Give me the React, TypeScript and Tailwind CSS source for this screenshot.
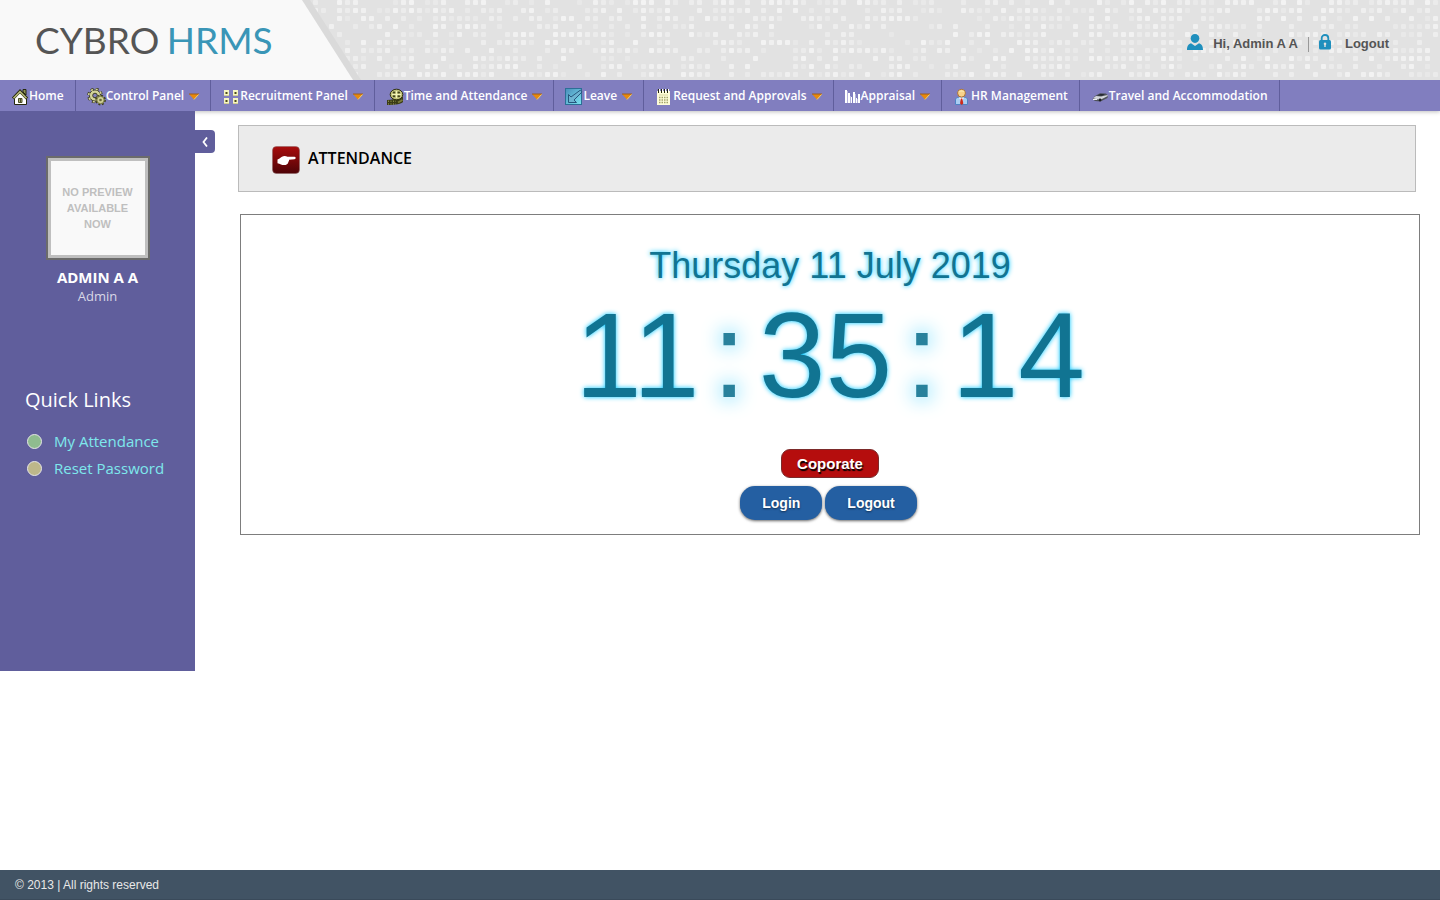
import React, { useMemo } from 'react';

type IconName =
  | 'home'
  | 'gears'
  | 'panel'
  | 'film'
  | 'leave'
  | 'note'
  | 'bars'
  | 'person'
  | 'car';

interface MenuItem {
  label: string;
  icon: IconName;
  hasMenu?: boolean;
}

const MENU: MenuItem[] = [
  { label: 'Home', icon: 'home' },
  { label: 'Control Panel', icon: 'gears', hasMenu: true },
  { label: 'Recruitment Panel', icon: 'panel', hasMenu: true },
  { label: 'Time and Attendance', icon: 'film', hasMenu: true },
  { label: 'Leave', icon: 'leave', hasMenu: true },
  { label: 'Request and Approvals', icon: 'note', hasMenu: true },
  { label: 'Appraisal', icon: 'bars', hasMenu: true },
  { label: 'HR Management', icon: 'person' },
  { label: 'Travel and Accommodation', icon: 'car' },
];

const QUICK_LINKS = [
  { label: 'My Attendance', dot: 'bg-[#8fbc8f]' },
  { label: 'Reset Password', dot: 'bg-[#bdb78a]' },
];

const MenuIcon = ({ name }: { name: IconName }) => {
  const common = { width: 18, height: 18, viewBox: '0 0 18 18', 'aria-hidden': true };

  switch (name) {
    case 'home':
      return (
        <svg {...common}>
          <path d="M12 1.5h3V7l-3-3z" fill="#8c8f52" stroke="#26280f" />
          <path d="M3.500 9.500 9 4l6.500 5.500v7h-12z" fill="#fff" stroke="#26280f" />
          <path d="M2 10.500 9 3.200l7 7.300" fill="none" stroke="#26280f" strokeWidth="3" />
          <path d="M2.500 10.300 9 3.700l6.500 6.600" fill="none" stroke="#b5b878" strokeWidth="1.600" />
          <path d="M7.500 10.500H11v4H7.500z" fill="#a9ac74" stroke="#4b4d27" />
          <path d="M9.500 11v3" stroke="#4b4d27" />
        </svg>
      );
    case 'gears':
      return (
        <svg {...common} width={19} viewBox="0 0 19 18">
          <circle cx="8" cy="7.500" r="6.300" fill="none" stroke="#3c3d20" strokeWidth="3" strokeDasharray="2.700 2.250" />
          <circle cx="8" cy="7.500" r="5.600" fill="#d3d39a" stroke="#3c3d20" />
          <circle cx="8" cy="7.500" r="6.300" fill="none" stroke="#d3d39a" strokeWidth="1.600" strokeDasharray="2 2.950" />
          <circle cx="8" cy="7.500" r="2.300" fill="#817ebf" stroke="#3c3d20" />
          <circle cx="13.500" cy="12" r="4.200" fill="none" stroke="#3c3d20" strokeWidth="2.400" strokeDasharray="1.800 1.500" />
          <circle cx="13.500" cy="12" r="3.700" fill="#cfcf95" stroke="#77783f" />
          <circle cx="13.500" cy="12" r="1.300" fill="#66673a" />
        </svg>
      );
    case 'panel':
      return (
        <svg {...common} shapeRendering="crispEdges">
          {[2, 11].map((x) =>
            [2, 10].map((y) => (
              <g key={`${x}-${y}`}>
                <rect x={x} y={y} width="5" height="6" fill="#f7f5c4" />
                <rect x={x} y={y + 5} width="5" height="1" fill="#d2cf92" />
                <rect x={x + 1} y={y + 2} width="3" height="2" fill="#a3a067" />
                <rect x={x + 2} y={y + 2} width="1" height="2" fill="#494a1f" />
              </g>
            ))
          )}
        </svg>
      );
    case 'film':
      return (
        <svg {...common}>
          <path d="M1 12c5 0 8-1 10-3h6v5c-2 2-6 3-16 3z" fill="#3a3b16" />
          <path d="M2 13.200h8M2 16h8" stroke="#a9aa60" strokeDasharray="1 1.500" />
          <path d="M12 14.500 16.500 12" stroke="#7b7c3b" strokeWidth="2" />
          <ellipse cx="10.500" cy="6.500" rx="6.300" ry="5.300" fill="#c3c47d" stroke="#2f300f" />
          <ellipse cx="8" cy="4.600" rx="1.300" ry="1" fill="#43441c" />
          <ellipse cx="12.800" cy="4.600" rx="1.300" ry="1" fill="#43441c" />
          <ellipse cx="8" cy="8.300" rx="1.300" ry="1" fill="#43441c" />
          <ellipse cx="12.800" cy="8.300" rx="1.300" ry="1" fill="#43441c" />
          <path d="M10.500 3v7M6 6.500h9" stroke="#f3f3b8" />
        </svg>
      );
    case 'leave':
      return (
        <svg {...common}>
          <defs>
            <linearGradient id="leave-fill" x1="0" y1="0" x2="1" y2="1">
              <stop offset="0" stopColor="#4a8dba" />
              <stop offset="1" stopColor="#7be4f0" />
            </linearGradient>
          </defs>
          <rect x="0.500" y="0.500" width="16" height="16" fill="url(#leave-fill)" stroke="#2c6f96" />
          <path d="M3.500 14.500v-8L6 9l9.500-7L17 4l-8 8 2.500 2.500z" fill="#6db4d2" stroke="#27567d" />
        </svg>
      );
    case 'note':
      return (
        <svg {...common}>
          <rect x="2" y="3" width="13" height="14" fill="#fdfbd8" />
          <path d="M3.500 1v4M6.500 1v4M9.500 1v4M12.500 1v4" stroke="#24240f" />
          <path d="M4.500 1v3M7.500 1v3M10.500 1v3M13.500 1v3" stroke="#fff" />
          <path d="M4 9.500h9M4 12h9M4 14.500h9" stroke="#a2a36a" strokeWidth="1.500" strokeDasharray="1.500 1" />
          <path d="M4 7h9" stroke="#d8d6a2" />
        </svg>
      );
    case 'bars':
      return (
        <svg {...common} width={16} viewBox="0 0 16 18" shapeRendering="crispEdges">
          <path d="M0 2h2v13H0zM3 5h2v10H3zM6 9h1v6H6zM8 4h2v11H8zM11 10h1v5h-1zM13 6h2v9h-2z" fill="#fff" />
          <path d="M2 3h1v12H2zM5 8h1v7H5zM10 6h1v9h-1zM12 11h1v4h-1z" fill="#b4b2dc" />
        </svg>
      );
    case 'person':
      return (
        <svg {...common}>
          <path d="M2.500 16.500V12C2.500 9.500 5 9 8.500 9s6 .5 6 3v4.500z" fill="#aacdf2" stroke="#4e82c4" />
          <path d="M6 9.500 8.500 14 11 9.500z" fill="#fff" />
          <path d="M7.800 10.500h1.500l1 5-1.500 1.500-1.800-1.500z" fill="#cf2a1c" />
          <circle cx="8.500" cy="5.200" r="3.900" fill="#f8d28b" stroke="#a96f31" />
          <path d="M5 4.500C6 1.500 11 1.500 12 4.500 10 3.500 7 3.700 5 4.500z" fill="#fae6a9" />
        </svg>
      );
    case 'car':
      return (
        <svg {...common}>
          <path d="M1.500 11 4 8 9 5.300l6 .2 2 2-.5 2.500-7 3.500L4 13z" fill="#50545c" />
          <path d="M2 10.300 5 8l5 .5L16.500 7l.3 1L9 12z" fill="#d3d6dc" />
          <path d="m6 7.500 3.500-1.600 4.500.1-3 1.700z" fill="#262a31" />
          <circle cx="9" cy="12" r="1.400" fill="#1c1e22" />
          <path d="M2 11.500h4" stroke="#eceef1" />
        </svg>
      );
  }
};

const Caret = () => (
  <svg width="10" height="7" viewBox="0 0 10 7" className="ml-[5px] mt-0.5" aria-hidden>
    <path d="M0 1h10L5 6.500z" fill="#e8890c" />
    <path d="M0 .5h10v1H0z" fill="#9c5a1a" />
    <path d="M9.500 1.500 5 6.500" stroke="#f6d36b" />
  </svg>
);

// Scattered light squares behind the header, seeded so they never jump around
const HeaderPattern = () => {
  const cells = useMemo(() => {
    const list: { x: number; y: number; o: number }[] = [];
    let seed = 48271;
    for (let row = 0; row < 10; row++) {
      for (let col = 0; col < 320; col++) {
        seed = (seed * 16807) % 2147483647;
        const r = seed / 2147483647;
        if (r < 0.6) list.push({ x: col * 8, y: row * 8, o: 0.3 + r });
      }
    }
    return list;
  }, []);

  return (
    <svg className="absolute inset-0 h-full w-full" aria-hidden>
      {cells.map((c) => (
        <rect key={`${c.x}-${c.y}`} x={c.x + 1} y={c.y} width="5" height="5" rx="1" fill="#f5f5f5" opacity={c.o} />
      ))}
      <path d="M0 0h310l51 80H0z" fill="#dadada" />
      <path d="M0 0h302l51 80H0z" fill="#f9f9f9" />
    </svg>
  );
};

const Header = () => (
  <header className="relative h-20 overflow-hidden bg-[#e2e2e2]">
    <HeaderPattern />
    <div className="relative flex h-full items-center justify-between pl-[35px] pr-[51px]">
      <h1 className="pb-0.5 font-['Lato',sans-serif] text-[37px] leading-none text-[#555]">
        CYBRO <span className="-ml-0.5 text-[#3a96b7]">HRMS</span>
      </h1>
      <div className="flex items-center pt-1 text-[13px] font-bold text-[#555]">
        <a href="#profile" className="flex items-center gap-2.5">
          <svg width="16" height="16" viewBox="0 0 16 16" fill="#1f8fbd" aria-hidden>
            <path d="M8 0c2.600 0 4.300 1.800 4.300 4.300S10.500 9 8 9 3.700 6.800 3.700 4.300 5.400 0 8 0z" />
            <path d="M0 16c0-3.500.8-5.500 4-6.800L8 12l4-2.800c3.200 1.300 4 3.300 4 6.800z" />
          </svg>
          <span className="pt-1">Hi, Admin A A</span>
        </a>
        <span className="mx-2.5 mt-1 h-[15px] w-px bg-[#999]" />
        <a href="#logout" className="flex items-center gap-3.5">
          <svg width="12" height="16" viewBox="0 0 12 16" aria-hidden>
            <path d="M2.700 7V4.200C2.700 2.200 4.100 1 6 1s3.300 1.200 3.300 3.200V7" fill="none" stroke="#1f8fbd" strokeWidth="1.800" />
            <rect y="6" width="12" height="9.500" rx="1.500" fill="#1f8fbd" />
            <path d="M6 8.500a1.300 1.300 0 0 1 .7 2.400V13H5.300v-2.100A1.300 1.300 0 0 1 6 8.500z" fill="#e2e2e2" />
          </svg>
          <span className="pt-1">Logout</span>
        </a>
      </div>
    </div>
  </header>
);

const MainMenu = () => (
  <nav className="bg-[#817ebf] shadow-[0_1px_4px_rgba(0,0,0,0.25)]">
    <ul className="flex h-[31px]">
      {MENU.map((item) => (
        <li key={item.label} className="border-r border-[#605e9c]">
          <a
            href="#menu"
            className="flex h-full items-center whitespace-nowrap px-[11px] font-['Open_Sans',sans-serif] text-xs font-semibold text-white"
          >
            <span className="pt-0.5">
              <MenuIcon name={item.icon} />
            </span>
            {item.label}
            {item.hasMenu && <Caret />}
          </a>
        </li>
      ))}
    </ul>
  </nav>
);

const Sidebar = () => (
  <aside className="relative min-h-[560px] w-[195px] shrink-0 bg-[#605e9c] pt-[45px] font-['Open_Sans',sans-serif]">
    <div className="flex flex-col items-center">
      <div className="border-2 border-[#6b6b6b]">
        <div className="flex h-[100px] w-[100px] items-center justify-center border-[3px] border-[#bfbfbf] bg-[#f9f9f9] text-center font-['Liberation_Sans',sans-serif] text-[11px] font-bold leading-4 text-[#bfbfbf]">
          NO PREVIEW
          <br />
          AVAILABLE
          <br />
          NOW
        </div>
      </div>
      <p className="mt-[7px] text-[15px] font-bold leading-5 text-white">ADMIN A A</p>
      <p className="text-[13px] leading-[18px] text-[#d8d8e6]">Admin</p>
    </div>

    <h2 className="mt-[81px] pl-[25px] text-xl leading-7 text-white">Quick Links</h2>
    <ul className="mt-3.5 pl-[27px]">
      {QUICK_LINKS.map((link) => (
        <li key={link.label}>
          <a href="#quick" className="flex items-center gap-3 text-[15px] leading-[27px] text-[#7ee8ec]">
            <span className={`h-[15px] w-[15px] rounded-full border border-[#e6e6e6] ${link.dot}`} />
            {link.label}
          </a>
        </li>
      ))}
    </ul>

    <button
      type="button"
      aria-label="Collapse sidebar"
      className="absolute left-full top-[19px] flex h-[23px] w-5 items-center justify-center rounded-r bg-[#605e9c]"
    >
      <svg width="6" height="10" viewBox="0 0 6 10" fill="none" stroke="#fff" strokeWidth="1.800" aria-hidden>
        <path d="M5 .5 1.500 5 5 9.500" />
      </svg>
    </button>
  </aside>
);

const PointingHand = () => (
  <svg width="28" height="28" viewBox="0 0 28 28" aria-hidden>
    <defs>
      <linearGradient id="hand-bg" x1="0" y1="0" x2="0" y2="1">
        <stop offset="0" stopColor="#a80c0c" />
        <stop offset="1" stopColor="#4e0307" />
      </linearGradient>
    </defs>
    <rect x="0.500" y="0.500" width="27" height="27" rx="4" fill="url(#hand-bg)" stroke="#8c6060" strokeOpacity="0.5" />
    <path
      d="M5.500 13.500c1.500-.5 2.500-1.500 4-2.500 2-1.200 4-1.300 6-.2h7c1.500 0 1.700 2.200 0 2.500l-5.500.5c.3 1-.2 1.800-.7 2.200 0 1.200-.6 1.800-1.300 2.200-1.500 1.200-4.500 1-6 .3-1.200-.4-2.200-1-3.500-1.200z"
      fill="#fff"
    />
  </svg>
);

const ClockPanel = () => (
  <section className="ml-[45px] mr-5 mt-[22px] flex flex-col items-center border border-[#7d7d7d] pb-3.5 pt-[30px] text-[#117492]">
    <p className="text-4xl leading-[42px] [text-shadow:0_0_5px_#00c6ff]">Thursday 11 July 2019</p>
    <div className="flex text-[120px] leading-[136px] [text-shadow:0_0_5px_#00c6ff]">
      <span>11</span>
      <span className="px-[13px] opacity-90 [text-shadow:0_0_20px_#00c6ff]">:</span>
      <span>35</span>
      <span className="px-[13px] opacity-90 [text-shadow:0_0_20px_#00c6ff]">:</span>
      <span>14</span>
    </div>
    <button
      type="button"
      className="mt-[26px] h-[29px] rounded-[9px] border border-[#7c2a2a] bg-[#b50d0d] px-[15px] text-[15px] font-bold leading-none text-white [text-shadow:1px_2px_1px_#000]"
    >
      Coporate
    </button>
    <div className="mt-2 flex gap-[3px] pr-[3px]">
      {['Login', 'Logout'].map((label) => (
        <button
          key={label}
          type="button"
          className="h-[34px] rounded-[15px] bg-[#245fa2] px-[22px] text-sm font-bold text-white shadow-[0_1px_3px_rgba(0,0,0,0.6)] [text-shadow:0_1px_2px_rgba(0,0,0,0.5)]"
        >
          {label}
        </button>
      ))}
    </div>
  </section>
);

const App: React.FC = () => {
  return (
    <div className="flex min-h-screen flex-col bg-white font-['Liberation_Sans',sans-serif]">
      <Header />
      <MainMenu />

      <div className="flex flex-1 items-start">
        <Sidebar />
        <main className="min-w-0 flex-1 pt-3.5">
          <div className="ml-[43px] mr-6 flex h-[67px] items-center gap-2 border border-[#bbb] bg-[#ebebeb] pl-[33px]">
            <span className="pt-[3px]">
              <PointingHand />
            </span>
            <h2 className="pb-0.5 font-['Open_Sans',sans-serif] text-base font-semibold text-black">ATTENDANCE</h2>
          </div>
          <ClockPanel />
        </main>
      </div>

      <footer className="flex h-[30px] items-center border-b border-[#3a4a5a] bg-[#415364] pl-[15px] pt-px text-xs text-[#e8e8e8]">
        © 2013 | All rights reserved
      </footer>
    </div>
  );
};

export default App;
